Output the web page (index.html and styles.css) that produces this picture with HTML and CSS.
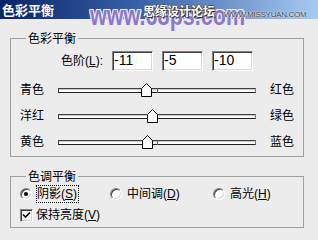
FILE: index.html
```html
<!DOCTYPE html>
<html lang="zh-CN">
<head>
<meta charset="utf-8">
<title>色彩平衡</title>
<link rel="stylesheet" href="styles.css">
</head>
<body>
<div class="window">
  <div class="titlebar">
    <span class="title">色彩平衡</span>
    <span class="wm wm-url">www.68ps.com</span>
    <span class="wm wm-cn">思缘设计论坛</span>
    <span class="wm wm-en">WWW.MISSYUAN.COM</span>
  </div>
  <div class="content">
    <fieldset class="group group-color">
      <legend>色彩平衡</legend>
      <div class="levels">
        <span class="levels-label">色阶(<u>L</u>):</span>
        <span class="field">-11</span>
        <span class="field">-5</span>
        <span class="field">-10</span>
      </div>
      <div class="slider-row">
        <span class="lbl-l">青色</span>
        <div class="slider">
          <div class="track"><i class="tick"></i></div>
          <svg class="thumb" style="left:83px" width="11" height="14" viewBox="0 0 11 14"><polygon points="5.5,0.5 10.5,5.5 10.5,13.5 0.5,13.5 0.5,5.5" fill="#fbfbfb" stroke="#000" stroke-width="1"/></svg>
        </div>
        <span class="lbl-r">红色</span>
      </div>
      <div class="slider-row">
        <span class="lbl-l">洋红</span>
        <div class="slider">
          <div class="track"><i class="tick"></i></div>
          <svg class="thumb" style="left:89px" width="11" height="14" viewBox="0 0 11 14"><polygon points="5.5,0.5 10.5,5.5 10.5,13.5 0.5,13.5 0.5,5.5" fill="#fbfbfb" stroke="#000" stroke-width="1"/></svg>
        </div>
        <span class="lbl-r">绿色</span>
      </div>
      <div class="slider-row">
        <span class="lbl-l">黄色</span>
        <div class="slider">
          <div class="track"><i class="tick"></i></div>
          <svg class="thumb" style="left:84px" width="11" height="14" viewBox="0 0 11 14"><polygon points="5.5,0.5 10.5,5.5 10.5,13.5 0.5,13.5 0.5,5.5" fill="#fbfbfb" stroke="#000" stroke-width="1"/></svg>
        </div>
        <span class="lbl-r">蓝色</span>
      </div>
    </fieldset>
    <fieldset class="group group-tone">
      <legend>色调平衡</legend>
      <div class="radio-row">
        <div class="opt opt-1"><span class="radio checked"></span><span class="opt-text focus">阴影(<u>S</u>)</span></div>
        <div class="opt opt-2"><span class="radio"></span><span class="opt-text">中间调(<u>D</u>)</span></div>
        <div class="opt opt-3"><span class="radio"></span><span class="opt-text">高光(<u>H</u>)</span></div>
      </div>
      <div class="check-row">
        <span class="checkbox"><svg width="9" height="9" viewBox="0 0 9 9"><path d="M1 3.5 L3.5 6 L8 1.5" fill="none" stroke="#000" stroke-width="1.6"/></svg></span>
        <span class="opt-text">保持亮度(<u>V</u>)</span>
      </div>
    </fieldset>
  </div>
</div>
</body>
</html>
```
FILE: styles.css
```css
* { box-sizing: border-box; }
html, body {
  margin: 0;
  padding: 0;
}
body {
  width: 318px;
  height: 240px;
  overflow: hidden;
  background: #ececec;
  font-family: "Liberation Sans", "Noto Sans CJK SC", sans-serif;
  font-size: 12px;
  color: #000;
}
.window {
  position: relative;
  width: 318px;
  height: 240px;
  background: #ececec;
}
.titlebar {
  height: 19px;
  background: linear-gradient(90deg, #0a246a 0%, #3b63a8 45%, #a6caf0 100%);
  display: flex;
  align-items: center;
  padding-left: 2px;
}
.title {
  color: #fff;
  font-family: "Noto Sans CJK SC", sans-serif;
  font-weight: bold;
  font-size: 13px;
  line-height: 15px;
}
.wm {
  position: absolute;
  white-space: nowrap;
  z-index: 5;
}
.wm-url {
  left: 90px;
  top: 3px;
  font-family: "Liberation Sans", sans-serif;
  font-weight: bold;
  font-size: 27px;
  line-height: 27px;
  color: #8c7ac6;
  transform: scaleX(0.8);
  transform-origin: 0 0;
  text-shadow: -1px 0 #f0ecfa, 1px 0 #f0ecfa, 0 -1px #f0ecfa, 0 1px #f0ecfa, 1px 1px #f0ecfa, -1px -1px #f0ecfa, 1px -1px #f0ecfa, -1px 1px #f0ecfa, 0 0 2px #d8d0f0;
}
.wm-cn {
  left: 143px;
  top: 2px;
  font-family: "Noto Sans CJK SC", sans-serif;
  font-weight: bold;
  font-size: 12px;
  line-height: 17px;
  color: #fff;
  text-shadow: 1px 1px 0 #333, -1px 0 #555, 0 -1px #555;
}
.wm-en {
  left: 224px;
  top: 10px;
  font-family: "Liberation Sans", sans-serif;
  font-size: 8px;
  line-height: 10px;
  color: #3a3a3a;
  letter-spacing: -0.3px;
  text-shadow: 0 0 2px #fff, 0 0 1px #fff;
}
.content {
  padding: 12px 14px 0 10px;
  display: flex;
  flex-direction: column;
}
.group {
  margin: 0;
  padding: 0;
  border: 1px solid #a0a0a0;
  min-width: 0;
}
.group legend {
  margin-left: 15px;
  padding: 0 2px;
  font-family: "Noto Sans CJK SC", sans-serif;
  font-size: 12px;
  line-height: 14px;
}
.group-color {
  padding-bottom: 1px;
}
.group-tone {
  margin-top: 12px;
  padding-bottom: 5px;
}
.levels {
  display: flex;
  align-items: center;
  margin-top: 6px;
  height: 20px;
}
.levels-label {
  width: 92px;
  text-align: right;
  margin-right: 9px;
  line-height: 14px;
}
.field {
  width: 41px;
  height: 20px;
  margin-right: 9px;
  background: #fff;
  border: 1px solid;
  border-color: #808080 #ffffff #ffffff #808080;
  box-shadow: inset 1px 1px 0 #404040, inset -1px -1px 0 #d8d8d8;
  font-family: "Liberation Sans", sans-serif;
  font-size: 14px;
  line-height: 17px;
  padding-left: 1px;
}
.slider-row {
  display: flex;
  align-items: center;
  height: 26px;
  padding-left: 9px;
}
.levels + .slider-row { margin-top: 6px; }
.lbl-l {
  width: 38px;
  line-height: 14px;
}
.lbl-r {
  margin-left: 14px;
  line-height: 14px;
}
.slider {
  position: relative;
  width: 198px;
  height: 14px;
  padding-top: 5px;
}
.track {
  position: relative;
  height: 5px;
  background: #fff;
  border: 1px solid;
  border-color: #404040 #808080 #202020 #404040;
  box-shadow: inset 0 1px 0 #c8c8c8;
}
.tick {
  position: absolute;
  left: 98px;
  top: -1px;
  width: 1px;
  height: 5px;
  background: #606060;
}
.thumb {
  position: absolute;
  top: 0;
  display: block;
}
.radio-row {
  display: flex;
  align-items: center;
  height: 18px;
  margin-top: 2px;
  padding-left: 9px;
}
.opt {
  display: flex;
  align-items: center;
}
.opt-1 { width: 90px; }
.opt-2 { width: 103px; }
.radio {
  width: 12px;
  height: 12px;
  border-radius: 50%;
  border: 1px solid;
  border-color: #808080 #ffffff #ffffff #808080;
  background: #fff;
  box-shadow: inset 1px 1px 0 #404040, inset -1px -1px 0 #d4d4d4;
  margin-right: 4px;
  position: relative;
  flex: none;
}
.radio.checked::after {
  content: "";
  position: absolute;
  left: 3px;
  top: 3px;
  width: 4px;
  height: 4px;
  border-radius: 50%;
  background: #000;
}
.opt-text {
  line-height: 16px;
  border: 1px solid transparent;
  padding: 0 1px 0 0;
  white-space: nowrap;
}
.opt-text.focus {
  border: 1px dotted #000;
}
.check-row {
  display: flex;
  align-items: center;
  height: 14px;
  margin-top: 5px;
  padding-left: 9px;
}
.check-row .opt-text { margin-left: 2px; }
.checkbox {
  width: 13px;
  height: 13px;
  background: #fff;
  border: 1px solid;
  border-color: #808080 #ffffff #ffffff #808080;
  box-shadow: inset 1px 1px 0 #404040, inset -1px -1px 0 #d4d4d4;
  display: flex;
  align-items: center;
  justify-content: center;
  flex: none;
}
.checkbox svg { display: block; }
```
